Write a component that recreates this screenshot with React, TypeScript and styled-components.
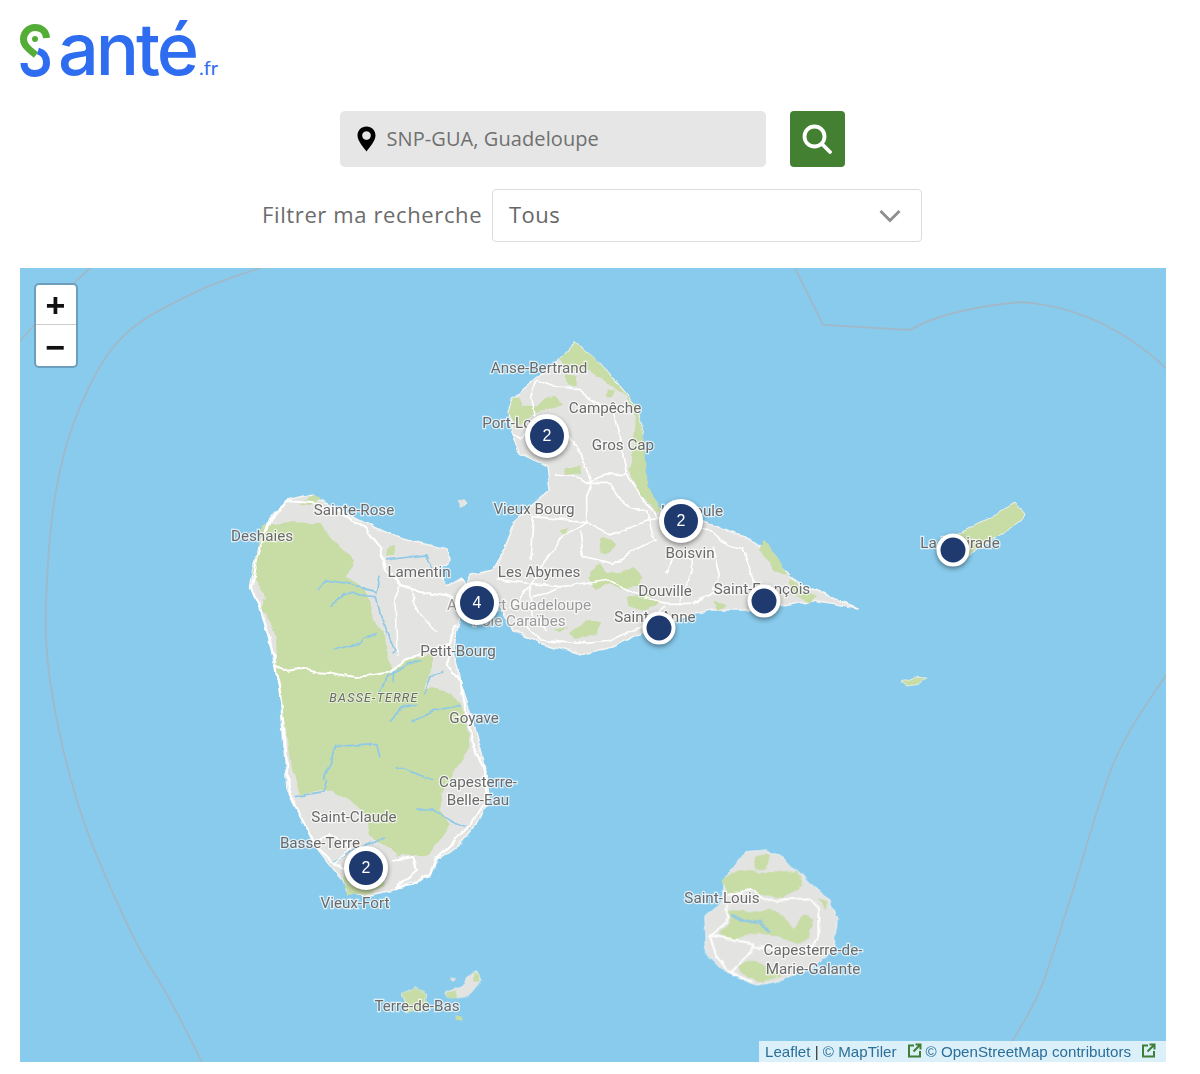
import React from "react";
import styled, { createGlobalStyle } from "styled-components";

const Global = createGlobalStyle`
  html, body { margin: 0; padding: 0; background: #fff; }
  body { font-family: "Open Sans", "Liberation Sans", sans-serif; }
`;

const Page = styled.div`
  width: 1186px;
  height: 1074px;
  padding: 0 20px;
  box-sizing: border-box;
  display: flex;
  flex-direction: column;
`;

const LogoBar = styled.header`
  height: 111px;
  display: flex;
  align-items: flex-start;
  flex: none;
`;

const LogoLink = styled.a`
  display: flex;
  align-items: baseline;
  height: 90px;
  color: #2f6df0;
  text-decoration: none;
`;

const LogoMark = styled.svg`
  width: 38px;
  height: 90px;
  flex: none;
  align-self: flex-start;
`;

const LogoWord = styled.span`
  font-family: Inter, sans-serif;
  font-weight: 500;
  font-size: 72px;
  line-height: 98px;
  letter-spacing: -3.1px;
`;

const LogoTld = styled.span`
  font-family: Lato, sans-serif;
  font-size: 20px;
  margin-left: 3px;
`;

const SearchRow = styled.form`
  display: flex;
  justify-content: center;
  gap: 24px;
  height: 56px;
  padding-right: 2px;
  flex: none;
`;

const SearchField = styled.div`
  width: 426px;
  background: #e6e6e6;
  border-radius: 5px;
  display: flex;
  align-items: center;
  gap: 11px;
  padding: 0 0 2px 17px;
  box-sizing: border-box;
  color: #707070;
  font-size: 20px;
  letter-spacing: 0.08px;
`;

const SearchPin = styled.svg`
  margin-top: 2px;
  flex: none;
`;

const SearchButton = styled.button`
  width: 55px;
  border: 0;
  padding: 0;
  background: #438031;
  border-radius: 4px;
  display: flex;
  align-items: center;
  justify-content: center;
`;

const FilterRow = styled.div`
  margin-top: 22px;
  display: flex;
  justify-content: center;
  align-items: center;
  gap: 11px;
  height: 53px;
  padding-right: 2px;
  flex: none;
`;

const FilterLabel = styled.label`
  width: 219px;
  white-space: nowrap;
  font-size: 22px;
  letter-spacing: 0.62px;
  color: #6b6b6b;
  padding-bottom: 3px;
`;

const FilterSelect = styled.div`
  width: 430px;
  height: 53px;
  box-sizing: border-box;
  border: 1px solid #dcdcdc;
  border-radius: 4px;
  background: #fff;
  display: flex;
  align-items: center;
  justify-content: space-between;
  padding: 0 20px 0 16px;
  font-size: 22px;
  letter-spacing: 0.45px;
  color: #666;
`;

const SelectText = styled.span`
  padding-bottom: 4px;
`;

const MapFrame = styled.div`
  position: relative;
  margin-top: 26px;
  width: 1146px;
  height: 794px;
  overflow: hidden;
  background: #89cbec;
  flex: none;
`;

const MapDrawing = styled.svg`
  display: block;
  width: 1146px;
  height: 794px;
  filter: blur(0.35px);
`;

const PlaceLabel = styled.text<{ $soft?: boolean }>`
  font-family: Roboto, sans-serif;
  font-size: 15.2px;
  fill: ${(p) => (p.$soft ? "#9a9a9a" : "#6a6a6a")};
  stroke: rgba(255, 255, 255, 0.72);
  stroke-width: 2.4px;
  paint-order: stroke;
  text-anchor: middle;
`;

const RegionLabel = styled.text`
  font-family: Roboto, sans-serif;
  font-style: italic;
  font-size: 12.5px;
  letter-spacing: 1.2px;
  fill: #6a6a6a;
  stroke: rgba(255, 255, 255, 0.5);
  stroke-width: 2px;
  paint-order: stroke;
  text-anchor: middle;
`;

const ZoomControl = styled.div`
  position: absolute;
  left: 14px;
  top: 15px;
  width: 44px;
  height: 85px;
  box-sizing: border-box;
  border: 2px solid #6b9fbd;
  border-radius: 5px;
  background: #fff;
  display: flex;
  flex-direction: column;
`;

const ZoomButton = styled.div<{ $first?: boolean }>`
  flex: 1;
  display: flex;
  align-items: center;
  justify-content: center;
  font-family: "Liberation Sans", sans-serif;
  font-weight: 700;
  font-size: 34px;
  line-height: 1;
  color: #111;
  padding: ${(p) => (p.$first ? "1px 1px 0 0" : "3px 1px 0 0")};
  border-bottom: ${(p) => (p.$first ? "1px solid #ccc" : "0")};
`;

const Pin = styled.div<{ $x: number; $y: number; $big: boolean }>`
  position: absolute;
  left: ${(p) => p.$x - 20}px;
  top: ${(p) => p.$y - 268}px;
  width: ${(p) => (p.$big ? 44 : 33)}px;
  height: ${(p) => (p.$big ? 44 : 33)}px;
  transform: translate(-50%, -50%);
  box-sizing: border-box;
  border: ${(p) => (p.$big ? 5 : 4)}px solid #fff;
  border-radius: 50%;
  background: #1f3a6e;
  box-shadow: 0 2px 5px rgba(0, 0, 0, 0.45);
  color: #fff;
  font-family: "Liberation Sans", sans-serif;
  font-size: 16px;
  display: flex;
  align-items: center;
  justify-content: center;
`;

const Attribution = styled.div`
  position: absolute;
  right: 0;
  bottom: 0;
  height: 21px;
  width: 407px;
  box-sizing: border-box;
  padding-left: 6px;
  background: rgba(255, 255, 255, 0.7);
  font-family: "Liberation Sans", sans-serif;
  font-size: 15.15px;
  line-height: 22px;
  color: #333;
  display: flex;
  align-items: center;
  white-space: pre;
`;

const AttrLink = styled.span`
  color: #2c6f98;
`;

const ExternalIcon = styled.svg<{ $gap: number; $after: number }>`
  width: 15px;
  height: 15px;
  margin-left: ${(p) => p.$gap}px;
  margin-right: ${(p) => p.$after}px;
  margin-top: -3px;
  flex: none;
`;

const Ext = ({ gap, after }: { gap: number; after: number }) => (
  <ExternalIcon $gap={gap} $after={after} viewBox="0 0 15 15" fill="none" stroke="#3f7f35" strokeWidth="2">
    <path d="M7 2.5H2v11h11V8" />
    <path d="M8.5 1.5h5v5M13 2 6.5 8.5" />
  </ExternalIcon>
);

const LAND = "#e3e3e1";
const GREEN = "#c8dca6";
const WATER = "#8ec9e8";
const BORDER = "#a0b9c9";

/* Catmull-Rom curve through the points of a maritime boundary */
const smooth = (pts: number[][]) => {
  let d = `M${pts[0][0]} ${pts[0][1]}`;
  for (let i = 0; i < pts.length - 1; i++) {
    const a = pts[Math.max(i - 1, 0)];
    const b = pts[i];
    const c = pts[i + 1];
    const e = pts[Math.min(i + 2, pts.length - 1)];
    d += `C${b[0] + (c[0] - a[0]) / 6} ${b[1] + (c[1] - a[1]) / 6} ${c[0] - (e[0] - b[0]) / 6} ${c[1] - (e[1] - b[1]) / 6} ${c[0]} ${c[1]}`;
  }
  return d;
};

const boundaries: number[][][] = [
  [[90, 268], [60, 297], [20, 341]],
  [[260, 268], [200, 290], [130, 330], [90, 385], [60, 470], [47, 580], [50, 680], [80, 810], [130, 930], [170, 1000], [202, 1062]],
  [[1166, 675], [1115, 760], [1070, 900], [1040, 990], [1010, 1045]],
];

const labels: [string, number, number, boolean?][] = [
  ["Anse-Bertrand", 539, 373],
  ["Campêche", 605, 413],
  ["Port-Louis", 517, 428],
  ["Gros Cap", 623, 450],
  ["Le Moule", 692, 516],
  ["Boisvin", 690, 558],
  ["Vieux Bourg", 534, 514],
  ["Sainte-Rose", 354, 515],
  ["Deshaies", 262, 541],
  ["Lamentin", 419, 577],
  ["Les Abymes", 539, 577],
  ["Aéroport Guadeloupe", 519, 610, true],
  ["Pôle Caraïbes", 519, 626, true],
  ["Douville", 665, 596],
  ["Saint-François", 762, 594],
  ["Sainte-Anne", 655, 622],
  ["La Désirade", 960, 548],
  ["Petit-Bourg", 458, 656],
  ["Goyave", 474, 723],
  ["Capesterre-", 478, 787],
  ["Belle-Eau", 478, 805],
  ["Saint-Claude", 354, 822],
  ["Basse-Terre", 320, 848],
  ["Vieux-Fort", 355, 908],
  ["Terre-de-Bas", 417, 1011],
  ["Saint-Louis", 722, 903],
  ["Capesterre-de-", 813, 955],
  ["Marie-Galante", 813, 974],
];

const pins: { x: number; y: number; n?: number }[] = [
  { x: 547, y: 436, n: 2 },
  { x: 681, y: 521, n: 2 },
  { x: 477, y: 603, n: 4 },
  { x: 366, y: 868, n: 2 },
  { x: 953, y: 550 },
  { x: 764, y: 601 },
  { x: 659, y: 628 },
];

const Island = () => (
  <MapDrawing viewBox="20 268 1146 794">
    <defs>
      <filter id="terrain" filterUnits="userSpaceOnUse" x="20" y="268" width="1146" height="794">
        <feTurbulence type="fractalNoise" baseFrequency="0.07" numOctaves="3" seed="4" result="noise" />
        <feDisplacementMap in="SourceGraphic" in2="noise" scale="6" xChannelSelector="R" yChannelSelector="G" />
        <feGaussianBlur stdDeviation="0.45" />
      </filter>
    </defs>

    {/* maritime boundaries */}
    <g fill="none" stroke={BORDER} strokeWidth="1.8">
      {boundaries.map((b) => (
        <path key={b[0].join()} d={smooth(b)} />
      ))}
      <path d="M795 268 823 325 910 330C930 318 960 308 1020 302 1070 305 1120 325 1166 368" />
    </g>

    <g filter="url(#terrain)">
      {/* Basse-Terre */}
      <path
        fill={LAND}
        stroke="#f4f4f2"
        strokeWidth="1.5"
        strokeLinejoin="round"
        d="M312 494 320 500 337 508 360 520 380 530 400 537 420 543 447 549 449 560 438 570 447 587 462 578 470 592 462 610 458 625 453 653 460 680 473 720 487 773 489 800 477 823 460 843 437 860 430 877 407 883 393 890 370 895 347 893 343 880 332 867 313 843 297 810 287 790 283 733 280 693 273 650 263 613 250 583 257 553 270 517 287 500Z"
      />
      <path
        fill={GREEN}
        d="M263 525 290 522 310 523 320 523 333 540 353 560 347 577 367 590 373 620 385 633 387 657 393 670 407 660 433 653 433 667 423 687 433 688 450 693 463 707 470 747 462 760 445 785 440 810 450 825 430 855 410 855 398 856 370 835 365 815 350 800 335 793 320 790 300 795 292 770 288 740 278 690 275 640 265 605 262 590 252 575 258 550Z"
      />
      <path fill={GREEN} d="M343 878 350 865 375 870 385 885 370 893 347 895Z" />
      <path fill={GREEN} d="M312 494 322 498 310 506 300 505ZM258 553 266 556 262 567 256 566ZM262 600 270 603 268 614 263 612ZM388 548 395 546 394 556 387 556Z" />

      {/* Basse-Terre rivers, in 3x crop units */}
      <g transform="translate(220 480) scale(.3333)" fill="none" stroke={WATER} strokeWidth="5">
        <path d="M290 330 320 300 380 310 470 335" />
        <path d="M330 380 370 340 470 350 480 400 500 450 525 510 515 520" />
        <path d="M340 510 420 490 470 460" />
        <path d="M480 640 500 590 600 540" />
        <path d="M520 610 520 570" />
        <path d="M510 725 550 680 590 670" />
        <path d="M575 725 640 695 720 675" />
        <path d="M310 900 350 800 470 790 480 830" />
        <path d="M530 860 640 900" />
        <path d="M610 640 630 590 670 575" />
        <path d="M495 240 620 225 640 270" />
        <path d="M480 290 470 340" />
      </g>
      <g transform="translate(260 780) scale(.3333)" fill="none" stroke={WATER} strokeWidth="5">
        <path d="M470 90 520 90 580 125 630 145" />
        <path d="M220 245 280 210 330 190 375 170" />
        <path d="M105 50 190 35 200 0" />
      </g>

      {/* Basse-Terre roads */}
      <g fill="none" stroke="#fff" strokeWidth="2.2" strokeLinejoin="round">
        <path d="M287 501 270 519 258 555 252 586 262 613 272 650 280 692 285 740 289 790 300 815 315 845 335 864 345 870" />
        <path d="M287 501 312 503 340 512 365 527 380 547 385 570 400 585 420 592 452 597" />
        <path d="M273 666 285 670 300 668 315 672 330 673 355 677 375 675 390 672 400 665 425 650 450 645" />
        <path d="M456 625 448 650 447 665 460 680 465 705 472 740 485 770 487 800 470 825 450 845 435 860 430 875 410 885 395 888 417 870 413 857 393 860" />
        <path d="M400 585 395 600 397 655" strokeWidth="1.5" />
        <path d="M410 590 420 615 437 632" strokeWidth="1.5" />
        <path d="M313 843 330 835 352 848 335 862" strokeWidth="1.5" />
      </g>

      {/* Grande-Terre */}
      <path
        fill={LAND}
        stroke="#f4f4f2"
        strokeWidth="1.5"
        strokeLinejoin="round"
        d="M575 343 560 360 537 377 513 397 508 413 513 437 520 453 547 467 550 490 515 520 503 553 493 570 470 575 462 590 480 592 497 600 500 607 513 630 540 643 580 655 613 647 647 630 680 617 713 610 747 610 780 607 813 600 857 608 830 597 793 580 773 557 747 537 707 523 667 513 650 500 637 473 643 433 637 407 617 383 593 357Z"
      />
      <g transform="translate(480 340) scale(.3333)" fill={GREEN}>
        <path d="M285 10 240 60 255 85 330 90 390 135 440 170 470 240 462 330 445 390 480 460 530 520 545 505 500 440 490 280 470 200 410 130 340 50Z" />
        <path d="M100 170 85 220 105 265 140 230 175 220 200 210 245 195 230 170 195 175 170 200 125 200 115 170Z" />
        <path d="M255 110 290 105 290 135 265 135ZM380 145 405 150 395 170 378 165ZM250 385 300 375 305 400 255 405ZM360 590 395 600 410 615 385 640 365 640ZM240 570 265 565 255 588Z" />
        <path d="M325 710 360 670 380 700 420 695 460 680 490 710 480 740 420 745 390 730 345 750ZM440 770 510 775 545 790 490 810 445 795ZM270 880 320 840 360 850 350 880 290 900ZM700 785 740 795 715 812ZM850 600 885 640 925 710 880 690 840 630ZM930 720 1010 770 990 785 930 760ZM470 770 510 760 520 790ZM220 870 260 860 240 880Z" />
      </g>
      <g transform="translate(480 340) scale(.3333)" fill="none" stroke="#fff" strokeWidth="5" strokeLinejoin="round">
        <path d="M170 120 155 170 165 230" />
        <path d="M170 120 240 145 300 145 320 175 400 215 415 280 430 350 440 400 490 480 530 530" />
        <path d="M100 285 130 290 180 230" />
        <path d="M240 300 270 290 300 340 335 430 320 470 320 545 240 600 190 670 150 740 130 760" />
        <path d="M225 405 290 410 320 430 390 400 440 400" />
        <path d="M320 430 390 430 430 490 500 515 520 590 530 600" />
        <path d="M320 545 390 585 510 540 600 520" />
        <path d="M320 545 160 530 150 660" />
        <path d="M660 560 700 580 730 610 790 630 815 700 830 750" />
        <path d="M50 720 150 730 240 740 290 735 390 720 480 770 560 790 640 790 720 750 830 745" />
        <path d="M530 600 450 640 400 670 310 650 300 570" />
        <path d="M560 700 580 650 640 660 640 690 600 780" />
        <path d="M700 620 720 700 700 750" />
        <path d="M130 850 180 900 280 910 400 900 500 850 560 800" />
        <path d="M150 740 160 830 200 870" />
        <path d="M150 740 90 810" />
        <path d="M240 740 200 760 160 770" />
      </g>
      <path fill={WATER} d="M461 590 470 583 474 590 467 596Z" />
      <path fill="#e4e4e0" d="M457 501 463 498 468 503 460 507Z" />

      {/* Marie-Galante */}
      <g transform="translate(670 840) scale(.3333)">
        <path
          fill={LAND}
          stroke="#f4f4f2"
          strokeWidth="3"
          strokeLinejoin="round"
          d="M225 35 290 30 350 60 420 130 480 180 505 240 490 330 430 380 340 420 260 435 170 400 110 340 105 230 155 190 160 120 210 60Z"
        />
        <g fill={GREEN}>
          <path d="M255 50 300 40 290 85 255 90Z" />
          <path d="M155 120 210 90 290 100 380 90 400 135 340 170 280 165 220 150 170 160Z" />
          <path d="M175 210 270 215 300 205 330 215 370 270 400 225 430 235 420 295 390 310 320 285 250 280 190 305 145 285 180 250Z" />
          <path d="M200 375 240 365 280 375 340 410 270 425 215 400Z" />
          <path d="M440 175 475 185 470 210Z" />
        </g>
        <g fill="none" stroke="#fff" strokeWidth="6" strokeLinejoin="round">
          <path d="M175 195 170 250 120 290 140 350 180 400 250 425" />
          <path d="M120 290 250 310 240 340 180 400" />
          <path d="M170 165 240 150 290 180 420 175 445 210 445 300 400 330 250 320" />
        </g>
        <path d="M180 225 220 240 270 250 300 275" fill="none" stroke={WATER} strokeWidth="7" />
      </g>

      {/* La Désirade and small islands */}
      <path fill={GREEN} stroke="#f0f0ec" d="M1025 515 1015 503 985 520 955 535 938 555 950 565 975 552 1000 535 1020 521Z" />
      <path fill={LAND} d="M938 555 948 543 962 548 950 565Z" />
      <path fill={GREEN} stroke="#eef0e8" strokeWidth=".8" d="M902 682 915 677 927 678 920 684 908 686Z" />
      <g transform="translate(260 780) scale(.3333)">
        <path fill={GREEN} stroke="#eef0e8" strokeWidth="2" d="M430 640 465 620 500 640 495 690 440 695Z" />
        <path fill={LAND} stroke="#eef0e8" strokeWidth="2" d="M560 640 615 610 625 585 650 575 660 605 625 650 570 655Z" />
        <path fill={GREEN} d="M640 578 655 585 655 605 640 605ZM565 640 590 630 590 655 568 655ZM585 705 605 710 608 725 590 720Z" />
        <path fill={LAND} d="M570 592 590 595 580 605Z" />
      </g>
    </g>

    {labels.map(([t, x, y, soft]) => (
      <PlaceLabel key={t} x={x} y={y} $soft={soft}>
        {t}
      </PlaceLabel>
    ))}
    <RegionLabel x={374} y={702}>BASSE-TERRE</RegionLabel>
  </MapDrawing>
);

export default function App() {
  return (
    <Page>
      <Global />
      <LogoBar>
        <LogoLink href="#">
          <LogoMark viewBox="20 0 38 90" fill="none" strokeWidth="7">
            <path stroke="#53ad37" d="M46.500 38C46 31 41 27.500 35 27.500 28.500 27.500 23.500 33 23.500 39 23.500 46 30 50 36 55" />
            <circle fill="#53ad37" cx="35" cy="39" r="3" />
            <path stroke="#2f6df0" d="M38 51C45 53 46.500 58 46.500 63 46.500 70 41 73.500 34.500 73.500 28 73.500 24 69 24 63" />
          </LogoMark>
          <LogoWord>anté</LogoWord>
          <LogoTld>.fr</LogoTld>
        </LogoLink>
      </LogoBar>

      <SearchRow>
        <SearchField>
          <SearchPin width="19" height="26" viewBox="0 0 19 26">
            <path
              fillRule="evenodd"
              d="M9.5 0.5C4.3 0.5 0.5 4.4 0.5 9.5 0.5 15 6.5 21 9.5 25.5 12.5 21 18.500 15 18.500 9.500 18.500 4.400 14.700 0.500 9.500 0.500ZM9.500 5.200A4.300 4.300 0 1 1 9.499 5.200Z"
              fill="#000"
            />
          </SearchPin>
          SNP-GUA, Guadeloupe
        </SearchField>
        <SearchButton type="button" aria-label="Rechercher">
          <svg width="30" height="30" viewBox="0 0 30 30" fill="none" stroke="#fff" strokeWidth="3.8" strokeLinecap="round">
            <circle cx="12.500" cy="12.500" r="10" />
            <path d="M20 20 28 28" />
          </svg>
        </SearchButton>
      </SearchRow>

      <FilterRow>
        <FilterLabel>Filtrer ma recherche</FilterLabel>
        <FilterSelect>
          <SelectText>Tous</SelectText>
          <svg width="22" height="14" viewBox="0 0 22 14" fill="none" stroke="#8e8e8e" strokeWidth="2.8">
            <path d="M1.500 2 11 11.500 20.500 2" />
          </svg>
        </FilterSelect>
      </FilterRow>

      <MapFrame>
        <Island />
        <ZoomControl>
          <ZoomButton $first>+</ZoomButton>
          <ZoomButton>−</ZoomButton>
        </ZoomControl>
        {pins.map((p) => (
          <Pin key={`${p.x}-${p.y}`} $x={p.x} $y={p.y} $big={p.n !== undefined}>
            {p.n}
          </Pin>
        ))}
        <Attribution>
          <AttrLink>Leaflet</AttrLink> | <AttrLink>© MapTiler</AttrLink>
          <Ext gap={10} after={4} />
          <AttrLink>© OpenStreetMap contributors</AttrLink>
          <Ext gap={10} after={0} />
        </Attribution>
      </MapFrame>
    </Page>
  );
}
